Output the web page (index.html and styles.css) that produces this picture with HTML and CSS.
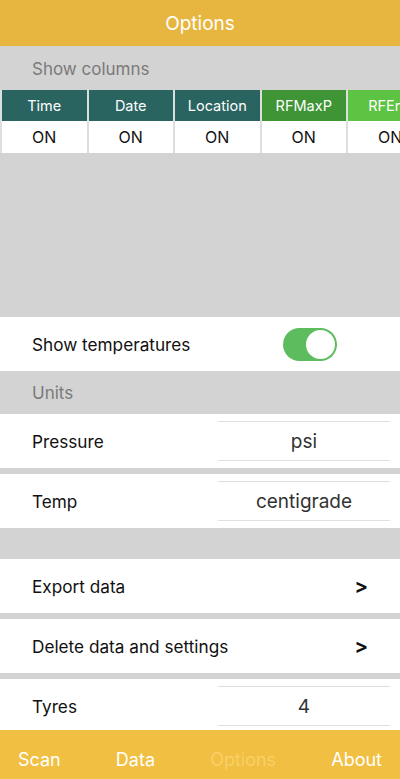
FILE: index.html
```html
<!DOCTYPE html>
<html>
<head>
<meta charset="utf-8">
<link rel="stylesheet" href="styles.css">
</head>
<body>
<div class="app">
  <header class="topbar">Options</header>
  <main class="content">
    <div class="section-title first">Show columns</div>
    <div class="columns">
      <div class="col"><div class="col-head teal">Time</div><div class="col-val">ON</div></div>
      <div class="col"><div class="col-head teal">Date</div><div class="col-val">ON</div></div>
      <div class="col"><div class="col-head teal">Location</div><div class="col-val">ON</div></div>
      <div class="col"><div class="col-head green">RFMaxP</div><div class="col-val">ON</div></div>
      <div class="col"><div class="col-head lime">RFEnd</div><div class="col-val">ON</div></div>
    </div>
    <div class="spacer-big"></div>
    <div class="row">
      <span class="label">Show temperatures</span>
      <span class="toggle"><span class="knob"></span></span>
    </div>
    <div class="section-title">Units</div>
    <div class="row">
      <span class="label">Pressure</span>
      <span class="field">psi</span>
    </div>
    <div class="sep"></div>
    <div class="row">
      <span class="label">Temp</span>
      <span class="field">centigrade</span>
    </div>
    <div class="spacer-mid"></div>
    <div class="row">
      <span class="label">Export data</span>
      <span class="chev">&gt;</span>
    </div>
    <div class="sep"></div>
    <div class="row">
      <span class="label">Delete data and settings</span>
      <span class="chev">&gt;</span>
    </div>
    <div class="sep"></div>
    <div class="row">
      <span class="label">Tyres</span>
      <span class="field">4</span>
    </div>
  </main>
  <nav class="tabbar">
    <span class="tab">Scan</span>
    <span class="tab">Data</span>
    <span class="tab active">Options</span>
    <span class="tab">About</span>
  </nav>
</div>
</body>
</html>
```

FILE: styles.css
```css
html, body {
  margin: 0;
  padding: 0;
}
body {
  font-family: Inter, "Liberation Sans", Arial, sans-serif;
  background: #d3d3d3;
}
.app {
  width: 400px;
  height: 779px;
  display: flex;
  flex-direction: column;
  overflow: hidden;
  background: #d3d3d3;
}
.topbar {
  height: 46px;
  flex: none;
  background: #e6b640;
  color: #fff;
  font-size: 19px;
  display: flex;
  align-items: center;
  justify-content: center;
}
.content {
  flex: 1;
  display: flex;
  flex-direction: column;
  overflow: hidden;
}
.section-title {
  height: 43px;
  flex: none;
  display: flex;
  align-items: center;
  padding-left: 32px;
  color: #7a7a7a;
  font-size: 17px;
}
.section-title.first {
  height: 44px;
  padding-top: 2px;
  box-sizing: border-box;
}
.columns {
  display: flex;
  gap: 2px;
  padding-left: 2px;
  background: #dedede;
  flex: none;
  overflow: hidden;
}
.col {
  flex: none;
  width: 84.5px;
  display: flex;
  flex-direction: column;
}
.col-head {
  height: 31px;
  color: #fff;
  font-size: 14.5px;
  display: flex;
  align-items: center;
  justify-content: center;
  white-space: nowrap;
  overflow: hidden;
}
.teal { background: #2a6461; }
.green { background: #3f9536; }
.lime { background: #5dc343; }
.col-val {
  height: 32px;
  background: #fff;
  color: #111;
  font-size: 16px;
  display: flex;
  align-items: center;
  justify-content: center;
}
.spacer-big {
  height: 164px;
  flex: none;
}
.spacer-mid {
  height: 31px;
  flex: none;
}
.sep {
  height: 6px;
  flex: none;
}
.row {
  height: 54px;
  flex: none;
  background: #fff;
  display: flex;
  align-items: center;
  padding-left: 32px;
}
.label {
  font-size: 17.2px;
  color: #111;
  flex: 1;
}
.toggle {
  width: 54px;
  height: 33px;
  border-radius: 17px;
  background: #5cbc5e;
  margin-right: 63px;
  display: flex;
  align-items: center;
  justify-content: flex-end;
  box-sizing: border-box;
  padding-right: 2px;
}
.knob {
  width: 29px;
  height: 29px;
  border-radius: 50%;
  background: #fff;
}
.field {
  width: 172px;
  height: 40px;
  margin-right: 10px;
  border-top: 1px solid #e0e0e0;
  border-bottom: 1px solid #e0e0e0;
  box-sizing: border-box;
  display: flex;
  align-items: center;
  justify-content: center;
  font-size: 19px;
  color: #333;
}
.chev {
  font-size: 20px;
  font-weight: bold;
  color: #111;
  margin-right: 32px;
}
.tabbar {
  height: 49px;
  flex: none;
  background: #f1bf42;
  display: flex;
  align-items: flex-start;
  justify-content: space-between;
  padding: 19px 18px 0 18px;
  font-size: 18px;
  color: #fff;
  box-sizing: border-box;
}
.tab.active {
  color: #f8d067;
}
```
